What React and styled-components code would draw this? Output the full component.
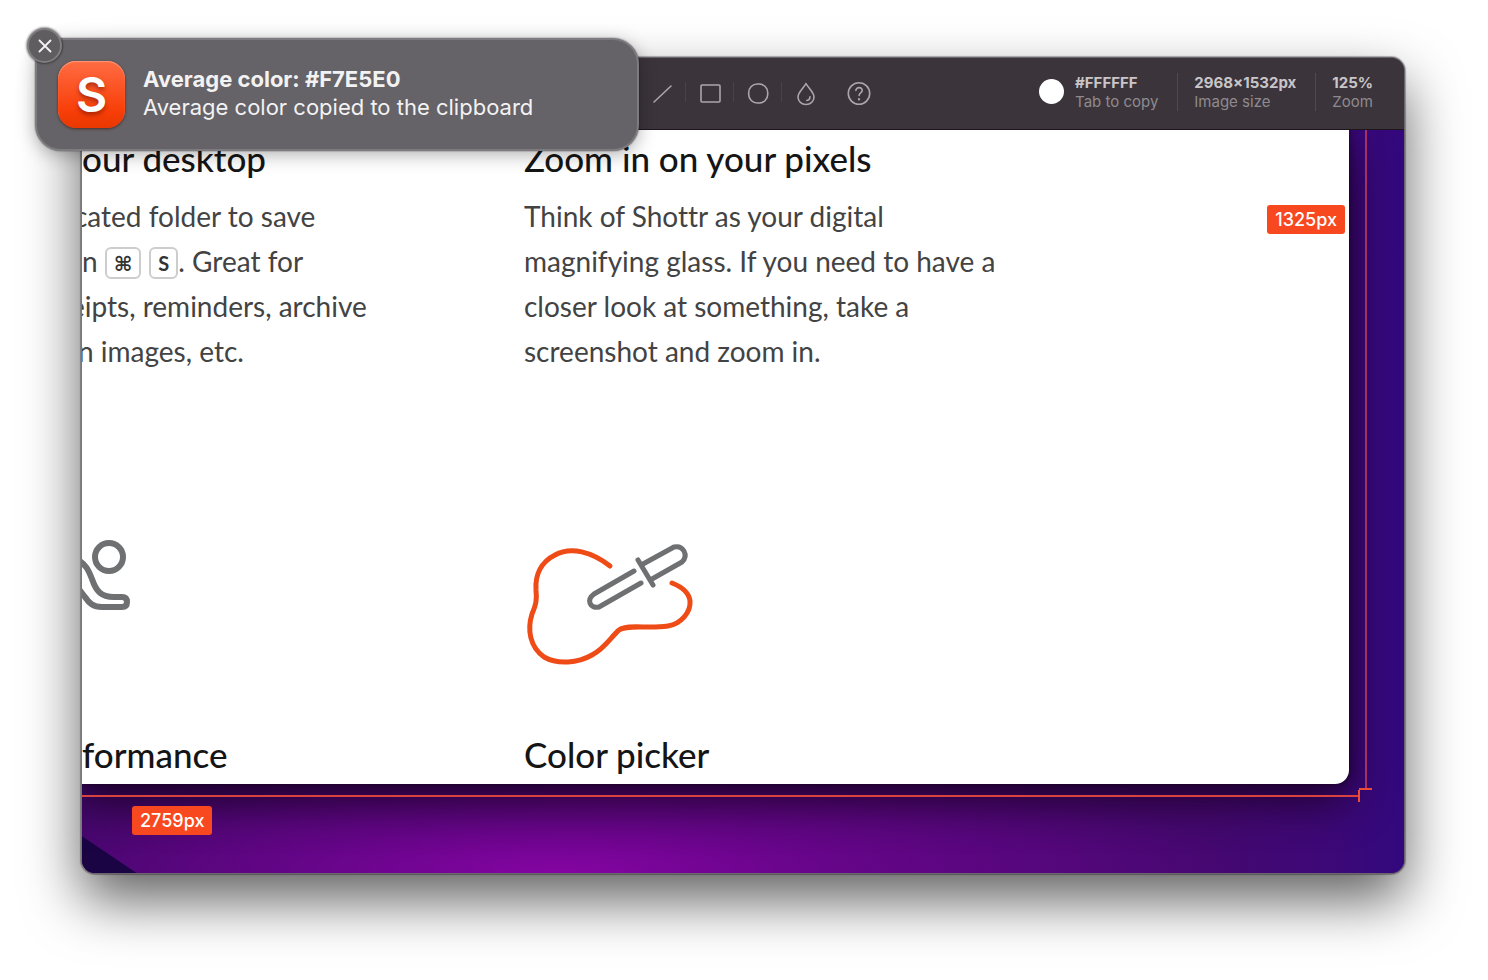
import React from "react";
import styled, { createGlobalStyle, css } from "styled-components";

const ui = `Inter, Roboto, "Liberation Sans", sans-serif`;
const copy = `Lato, "Open Sans", sans-serif`;

const GlobalStyle = createGlobalStyle`
  *, *::before, *::after { box-sizing: border-box; }
  body { margin: 0; background: #fff; font-family: ${ui}; }
  h2, p { margin: 0; }
  button { font: inherit; padding: 0; border: 0; background: none; cursor: pointer; }
`;

const Desktop = styled.main`
  position: relative;
  min-height: 100vh;
  padding: 57px 83px 106px 81px;
  overflow: hidden;
`;

const AppWindow = styled.section`
  border-radius: 14px;
  overflow: hidden;
  border: 1px solid #6c646f;
  border-left-color: #777;
  background: #3b353b;
  box-shadow: 0 0 1px 1px rgba(0, 0, 0, 0.3), 0 26px 56px rgba(0, 0, 0, 0.62);
`;

const Toolbar = styled.header`
  display: flex;
  align-items: center;
  justify-content: space-between;
  height: 72px;
  padding: 0 31px 4px 556px;
  background: #3b353b;
  border-bottom: 1px solid #1d171d;
`;

const Tools = styled.nav`
  display: flex;
  align-items: center;
`;

const ToolButton = styled.button`
  display: grid;
  place-items: center;
  width: 48px;
  height: 20px;
  color: #aaa6aa;
  ${(p) => p.$divided && css`border-right: 1px solid #484248;`}
  ${(p) => p.$apart && css`margin-left: 5px;`}
`;

const Readouts = styled.div`
  display: flex;
  align-items: center;
`;

const Swatch = styled.span`
  width: 25px;
  height: 25px;
  margin-right: 11px;
  border-radius: 50%;
  background: #fff;
`;

const Readout = styled.div`
  display: flex;
  flex-direction: column;
  font-size: 15px;
  line-height: 19px;
  color: #8f8a8f;
  strong { font-weight: 700; color: #c9c5c9; }
  & + & {
    margin-left: 19px;
    padding-left: 16px;
    border-left: 1px solid #504a50;
  }
`;

const Canvas = styled.div`
  position: relative;
  overflow: hidden;
  padding: 0 55px 89px 0;
  background:
    linear-gradient(34deg, #1a0444 30px, transparent 31px),
    linear-gradient(90deg, transparent 95%, rgba(48, 8, 125, 0.6) 100%),
    radial-gradient(ellipse 680px 130px at 36% 100%, #8404a2 0%, rgba(112, 4, 146, 0.75) 40%, transparent 100%),
    linear-gradient(90deg, #36085f 0%, #4c0870 40%, #450870 85%, #38087c 100%);
`;

const Page = styled.article`
  position: relative;
  display: grid;
  grid-template-columns: 442px minmax(0, 1fr);
  padding: 6px 0 8px;
  overflow: hidden;
  border-radius: 0 0 14px 0;
  background: #fff;
  box-shadow: 0 18px 44px rgba(28, 0, 40, 0.9), 0 0 12px rgba(20, 0, 35, 0.7), 0 0 2px #111;
`;

const Column = styled.div`
  display: flex;
  flex-direction: column;
  white-space: nowrap;
  font-variant-ligatures: none;
`;

const Heading = styled.h2`
  font-family: ${copy};
  font-size: 35px;
  font-weight: 500;
  line-height: 44px;
  color: #151515;
`;

const Body = styled.p`
  margin-top: 14px;
  font-family: ${copy};
  font-size: 28px;
  line-height: 45px;
  color: #434343;
`;

const Line = styled.span`
  display: block;
  margin-left: ${(p) => -(p.$cut || 0)}px;
`;

const Key = styled.kbd`
  display: inline-block;
  min-width: 28px;
  margin-right: ${(p) => (p.$last ? 0 : 8)}px;
  padding: 0 7px;
  border: 2px solid #cdcdcd;
  border-radius: 6px;
  font: 700 20px/28px Lato, "DejaVu Sans", sans-serif;
  text-align: center;
  vertical-align: 1px;
  color: #333;
`;

const Illustration = styled.svg`
  display: block;
  height: 150px;
  margin: 156px 0 52px;
  fill: none;
  stroke: #6e7072;
  stroke-width: 6;
  stroke-linecap: round;
  stroke-linejoin: round;
`;

const HorizontalRuler = styled.div`
  position: absolute;
  left: 0;
  right: 44px;
  bottom: 71px;
  height: 12px;
  border-right: 2px solid #f04c35;
  &::before {
    content: "";
    position: absolute;
    inset: 5px 0 auto 0;
    height: 2px;
    background: #d9433f;
  }
`;

const VerticalRuler = styled.div`
  position: absolute;
  top: 0;
  right: 32px;
  bottom: 83px;
  width: 13px;
  border-bottom: 2px solid #f04c35;
  &::before {
    content: "";
    position: absolute;
    inset: 0 auto 0 6px;
    width: 2px;
    background: #a92f60;
  }
`;

const Measure = styled.output`
  position: absolute;
  padding: 0 8px;
  border-radius: 3px;
  background: #f8481f;
  color: #fff;
  font-size: 18px;
  font-weight: 500;
  line-height: 29px;
  ${(p) => (p.$axis === "x" ? css`left: 50px; bottom: 38px;` : css`right: 59px; top: 75px;`)}
`;

const Notification = styled.aside`
  position: absolute;
  top: 38px;
  left: 35px;
  display: flex;
  align-items: center;
  gap: 18px;
  width: 604px;
  height: 113px;
  padding: 0 21px;
  border: 2px solid #7d7b7f;
  border-radius: 26px;
  background: #656367;
  box-shadow: 0 0 1px 1px rgba(0, 0, 0, 0.15), 0 4px 18px rgba(0, 0, 0, 0.3);
  color: #f3f2f3;
`;

const Message = styled.div`
  padding-bottom: 4px;
  font-size: 22px;
  line-height: 28px;
  white-space: nowrap;
  strong { display: block; font-weight: 700; }
`;

const Close = styled.button`
  position: absolute;
  top: -12px;
  left: -10px;
  display: grid;
  place-items: center;
  width: 35px;
  height: 35px;
  border: 2px solid #7f7d80;
  border-radius: 50%;
  background: #5f5d60;
  box-shadow: 0 0 2px 1px rgba(0, 0, 0, 0.4);
  color: #f3f2f3;
`;

const AppIcon = styled.div`
  display: grid;
  place-items: center;
  width: 67px;
  height: 67px;
  border-radius: 18px;
  background: linear-gradient(#ff6c43, #f83e08 75%, #e93800);
  box-shadow: inset 0 1px 1px #ff9b7c, 0 1px 3px rgba(60, 10, 0, 0.6);
  color: #fff;
  font-size: 48px;
  font-weight: 600;
  line-height: 67px;
  text-shadow: 0 3px 4px rgba(110, 20, 0, 0.55);
`;

const Glyph = ({ children, size = 24 }) => (
  <svg width={size} height={size} viewBox="0 0 24 24" fill="none" stroke="currentColor" strokeWidth="1.6" strokeLinecap="round" strokeLinejoin="round" aria-hidden="true">
    {children}
  </svg>
);

export default function App() {
  return (
    <Desktop>
      <GlobalStyle />
      <AppWindow>
        <Toolbar>
          <Tools aria-label="Drawing tools">
            <ToolButton $divided aria-label="Line">
              <Glyph><path d="M4 20 21 4" /></Glyph>
            </ToolButton>
            <ToolButton $divided aria-label="Rectangle">
              <Glyph><rect x="3" y="3" width="19" height="17" rx="1" /></Glyph>
            </ToolButton>
            <ToolButton $divided aria-label="Oval">
              <Glyph><rect x="2.7" y="2" width="19" height="19" rx="8.6" /></Glyph>
            </ToolButton>
            <ToolButton aria-label="Blur">
              <Glyph>
                <path d="M12 1.5C9.8 6 4 10.2 4 15a8 7.5 0 0 0 16 0C20 10.2 14.2 6 12 1.5Z" />
                <path d="M16 14.7c0 2-1.3 3.5-3.2 3.8" />
              </Glyph>
            </ToolButton>
            <ToolButton $apart aria-label="Help">
              <Glyph>
                <circle cx="12" cy="11.5" r="10.7" />
                <path d="M8.9 8.5c0-4 6.6-3.6 6.3.1-.2 2.2-3.1 2.3-3.1 4.9" />
                <path d="M12 17.2v.2" strokeWidth="2.2" />
              </Glyph>
            </ToolButton>
          </Tools>
          <Readouts>
            <Swatch />
            <Readout><strong>#FFFFFF</strong><span>Tab to copy</span></Readout>
            <Readout><strong>2968×1532px</strong><span>Image size</span></Readout>
            <Readout><strong>125%</strong><span>Zoom</span></Readout>
          </Readouts>
        </Toolbar>
        <Canvas>
          <Page>
            <Column>
              <Heading>our desktop</Heading>
              <Body>
                <Line $cut={8}>cated folder to save</Line>
                <Line>n <Key>⌘</Key><Key $last>S</Key>. Great for</Line>
                <Line $cut={12}>eipts, reminders, archive</Line>
                <Line $cut={4}>n images, etc.</Line>
              </Body>
              <Illustration width="180" viewBox="82 530 180 150" aria-hidden="true">
                <circle cx="109" cy="557" r="14" />
                <path d="M78 560c8 5 10 9 14 19 4 12 9 18 22 18h8q5 0 5 5t-5 5h-20c-9 0-13-4-17-10l-7-9" />
              </Illustration>
              <Heading>formance</Heading>
            </Column>
            <Column>
              <Heading>Zoom in on your pixels</Heading>
              <Body>
                <Line>Think of Shottr as your digital</Line>
                <Line>magnifying glass. If you need to have a</Line>
                <Line>closer look at something, take a</Line>
                <Line>screenshot and zoom in.</Line>
              </Body>
              <Illustration width="200" viewBox="524 530 200 150" aria-hidden="true">
                <path
                  stroke="#ee4b16"
                  strokeWidth="5"
                  d="M610 566C592 552 571 546 555 555C541 562 535 575 536 590C537 600 536 605 532 614C527 630 530 647 544 657C558 665 578 663 592 655C605 648 611 637 619 630C628 624 647 629 668 626C681 624 691 612 690 601C689 592 682 587 672 583"
                />
                <path strokeWidth="5" d="M634 571 594 594C586 600 590 609 599 607L641 583M643 564 674 547C683 545 689 555 682 562L652 579M638 560 653 585" />
              </Illustration>
              <Heading>Color picker</Heading>
            </Column>
          </Page>
          <HorizontalRuler />
          <VerticalRuler />
          <Measure $axis="y">1325px</Measure>
          <Measure $axis="x">2759px</Measure>
        </Canvas>
      </AppWindow>
      <Notification role="status">
        <Close aria-label="Dismiss notification">
          <Glyph size={22}><path d="m6 6 12 12M18 6 6 18" strokeWidth="2" /></Glyph>
        </Close>
        <AppIcon>S</AppIcon>
        <Message>
          <strong>Average color: #F7E5E0</strong>
          Average color copied to the clipboard
        </Message>
      </Notification>
    </Desktop>
  );
}
